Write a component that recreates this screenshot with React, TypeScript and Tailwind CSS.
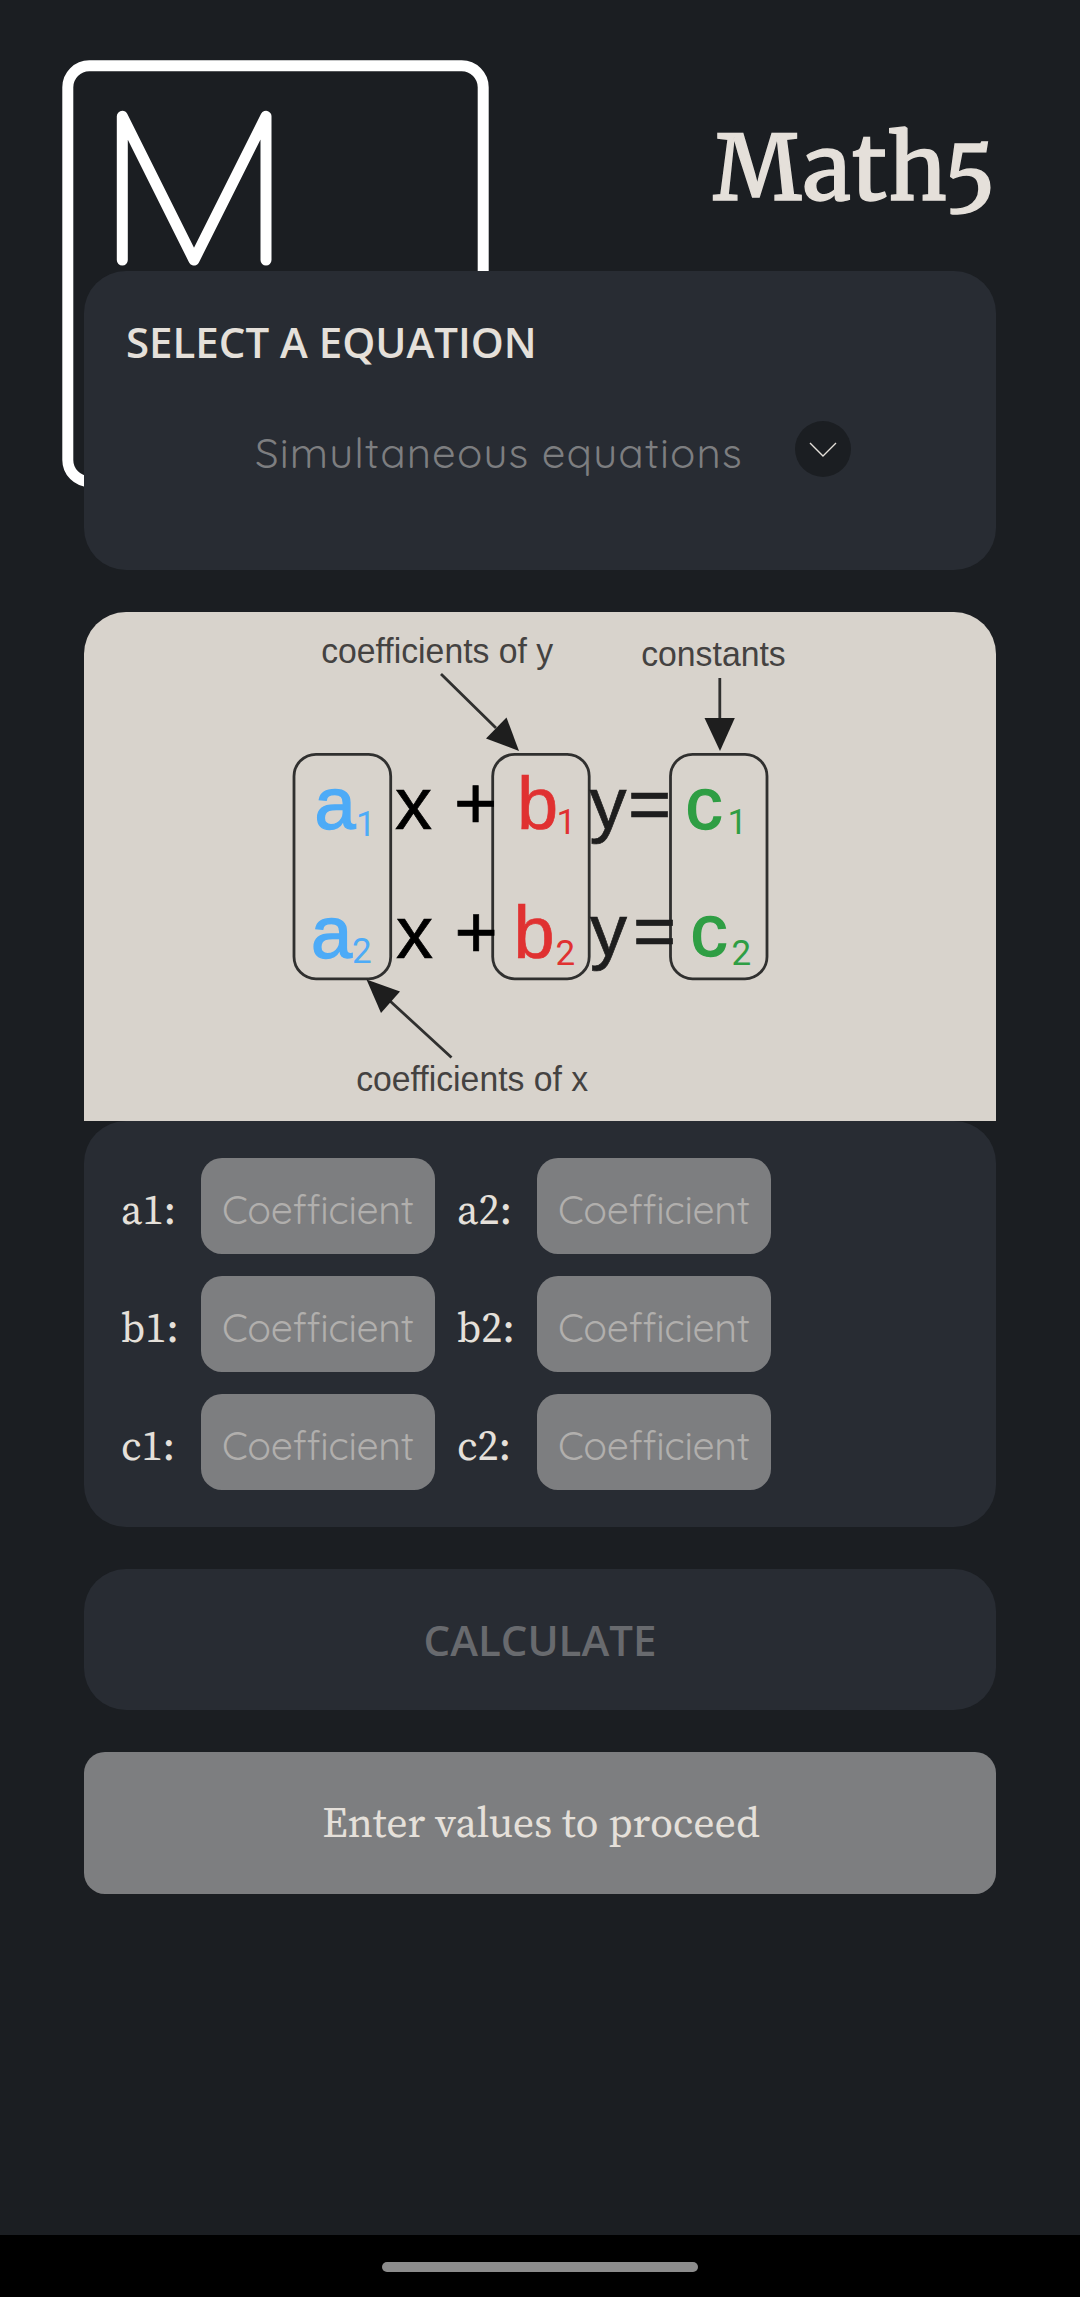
const rows = [
  ["a1", "a2"],
  ["b1", "b2"],
  ["c1", "c2"],
];

function Logo() {
  return (
    <svg className="absolute left-[62px] top-[60px] h-[428px] w-[427px]" viewBox="62 60 427 428" fill="none" stroke="#fff" strokeWidth="11">
      <rect x="67.8" y="65.8" width="415.4" height="415.6" rx="21.5" />
      <polyline points="122.3,260 122.3,116.3 194,260 266,116.3 266,260" strokeLinecap="round" strokeLinejoin="round" />
    </svg>
  );
}

function Coefficient({ name }: { name: string }) {
  return (
    <label className="flex items-center">
      <span className="w-20 pt-1.5 font-['Source_Serif_4','Liberation_Serif',serif] text-[42px] leading-[58px] text-[#e5e0da]">{name}:</span>
      <span className="flex h-24 w-[234px] items-center rounded-[21px] bg-[#7d7e80] pl-[21px] pt-1.5 font-[Quicksand,Lato,sans-serif] text-[39.375px] font-normal leading-[49px] tracking-[-0.35px] text-[#b1afad]">
        Coefficient
      </span>
    </label>
  );
}

type GlyphProps = { x: number; y: number; fill: string; children: string; weight?: number };
function Glyph({ x, y, fill, children, weight = 0.7 }: GlyphProps) {
  return (
    <text x={x} y={y} fontSize={74} fill={fill} stroke={fill} strokeWidth={weight}>
      {children}
    </text>
  );
}

function Sub({ x, y, fill, children }: GlyphProps) {
  return (
    <text x={x} y={y} fontSize={35} fontFamily="Roboto, 'Liberation Sans', sans-serif" fill={fill}>
      {children}
    </text>
  );
}

function Diagram() {
  const blue = "#4dabf7";
  const red = "#e03131";
  const green = "#2f9e44";
  const ink = "#1e1e1e";
  return (
    <svg className="h-[509px] w-[912px]" viewBox="84 612 912 509" fontFamily="'Liberation Sans', Arial, sans-serif">
      <g fontSize="35" fill="#444241">
        <text x="321.2" y="662.5" textLength="232" lengthAdjust="spacingAndGlyphs">coefficients of y</text>
        <text x="641.2" y="666" textLength="144.5" lengthAdjust="spacingAndGlyphs">constants</text>
        <text x="356.2" y="1091" textLength="232" lengthAdjust="spacingAndGlyphs">coefficients of x</text>
      </g>
      <g fill="none" stroke={ink} strokeOpacity="0.9" strokeWidth="2.8">
        <rect x="294" y="754.3" width="96.7" height="224.5" rx="22" />
        <rect x="492.7" y="754.3" width="96.5" height="224.5" rx="22" />
        <rect x="670.5" y="754.3" width="96.5" height="224.5" rx="22" />
        <path d="M441 674 L496 728 M719.8 678 V720 M451.5 1057.5 L390 1001" />
      </g>
      <g fill={ink}>
        <path d="M519 751 L506.5 717.5 L486 738.5 Z" />
        <path d="M720 751 L704.5 718 H734.8 Z" />
        <path d="M366.5 979.5 L400 991.5 L381 1013 Z" />
      </g>
      <Glyph x={314.5} y={829} fill={blue} weight={1.4}>a</Glyph>
      <Sub x={356} y={835.5} fill={blue}>1</Sub>
      <Glyph x={395} y={829} fill="#000">x</Glyph>
      <Glyph x={454} y={829} fill="#000">+</Glyph>
      <Glyph x={517} y={829} fill={red}>b</Glyph>
      <Sub x={556.5} y={833.5} fill={red}>1</Sub>
      <Glyph x={589.5} y={829} fill={ink}>y</Glyph>
      <Glyph x={628} y={829} fill={ink}>=</Glyph>
      <Glyph x={685.5} y={829} fill={green} weight={1.4}>c</Glyph>
      <Sub x={727.5} y={833.5} fill={green}>1</Sub>
      <Glyph x={311} y={958} fill={blue} weight={1.4}>a</Glyph>
      <Sub x={352} y={962.5} fill={blue}>2</Sub>
      <Glyph x={396} y={958} fill="#000">x</Glyph>
      <Glyph x={454.5} y={958} fill="#000">+</Glyph>
      <Glyph x={513.5} y={958} fill={red}>b</Glyph>
      <Sub x={555.5} y={964.5} fill={red}>2</Sub>
      <Glyph x={590} y={956} fill={ink}>y</Glyph>
      <Glyph x={633} y={956} fill={ink}>=</Glyph>
      <Glyph x={690.5} y={956} fill={green} weight={1.4}>c</Glyph>
      <Sub x={731.5} y={964.5} fill={green}>2</Sub>
    </svg>
  );
}

export default function App() {
  return (
    <div className="relative flex h-[2297px] w-[1080px] flex-col overflow-hidden bg-[#1b1e22]">
      <Logo />
      <main className="relative flex flex-1 flex-col px-[84px]">
        <header className="flex h-[271px] justify-end pt-28">
          <h1 className="font-[Merriweather,'DejaVu_Serif',serif] text-[89.25px] font-medium leading-[112px] tracking-[1.5px] text-[#e5e0da] oldstyle-nums [-webkit-text-stroke:1.4px_#e5e0da]">
            Math5
          </h1>
        </header>

        <section className="h-[299px] rounded-[42px] bg-[#282c33] px-[42px] pt-[42px]">
          <h2 className="font-['Open_Sans',sans-serif] text-[42px] font-semibold leading-[57px] text-[#e5e0da]">SELECT A EQUATION</h2>
          <div className="mt-[51px] flex pl-[129px]">
            <span className="mt-[6px] w-[540px] whitespace-nowrap font-[Quicksand,Lato,sans-serif] text-[42px] font-normal leading-[52px] tracking-[1.1px] text-[#7d7e80]">
              Simultaneous equations
            </span>
            <span className="flex size-14 items-center justify-center rounded-full bg-[#1b1e22]">
              <svg className="h-4 w-7" viewBox="0 0 28 16" fill="none" stroke="#e5e0da" strokeWidth="1.4">
                <path d="M1 2 L14 15 L27 2" />
              </svg>
            </span>
          </div>
        </section>

        <section className="mt-[42px] overflow-hidden rounded-t-[42px] bg-[#d8d3cc]">
          <Diagram />
        </section>

        <section className="flex h-[406px] flex-col gap-[22px] rounded-[42px] bg-[#282c33] py-[37px] pl-[37px]">
          {rows.map((row) => (
            <div key={row[0]} className="flex gap-[22px]">
              {row.map((name) => (
                <Coefficient key={name} name={name} />
              ))}
            </div>
          ))}
        </section>

        <button className="mt-[42px] flex h-[141px] items-center justify-center rounded-[42px] bg-[#282c33] font-['Open_Sans',sans-serif] text-[42px] font-semibold leading-[57px] text-[#686a6e]">
          CALCULATE
        </button>

        <p className="mt-[42px] flex h-[142px] items-center justify-center rounded-[21px] bg-[#7d7e80] pb-0.5 pl-0.5 font-['Source_Serif_4','Liberation_Serif',serif] text-[42px] leading-[58px] tracking-[-0.08px] text-[#e5e0da]">
          Enter values to proceed
        </p>
      </main>

      <footer className="flex h-[62px] justify-center bg-black pt-[27px]">
        <div className="h-2.5 w-[316px] rounded-full bg-[#8c8c8c]" />
      </footer>
    </div>
  );
}
